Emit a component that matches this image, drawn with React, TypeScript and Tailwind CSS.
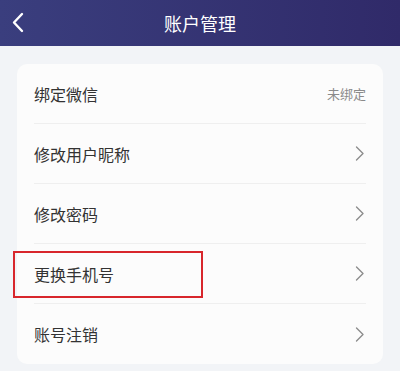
const rows = [
  { label: '绑定微信', value: '未绑定' },
  { label: '修改用户昵称' },
  { label: '修改密码' },
  { label: '更换手机号', marked: true },
  { label: '账号注销' },
];

function Chevron() {
  return (
    <svg width="10" height="15" viewBox="0 0 10 15" fill="none" stroke="#8c8c8c" strokeWidth="1.4" strokeLinecap="round" strokeLinejoin="round">
      <path d="M1.5 1 L8 7.5 L1.5 14" />
    </svg>
  );
}

export default function App() {
  return (
    <div
      className="w-[400px] h-[371px] bg-[#f2f4f7] overflow-hidden"
      style={{ fontFamily: '"Noto Sans CJK SC", "Noto Sans", sans-serif' }}
    >
      <header className="relative h-[46px] flex items-center justify-center bg-gradient-to-r from-[#3a3e7e] to-[#302a69]">
        <svg
          className="absolute left-[11px] top-[12px]"
          width="14"
          height="21"
          viewBox="0 0 14 21"
          fill="none"
          stroke="white"
          strokeWidth="2.4"
          strokeLinecap="round"
          strokeLinejoin="round"
        >
          <path d="M11 2 L3 10.5 L11 19" />
        </svg>
        <h1 className="text-[18px] text-white">账户管理</h1>
      </header>

      <div className="px-[17px] pt-[18px]">
        <div className="relative bg-[#fcfcfc] rounded-[10px] px-[17px]">
          {rows.map((row, i) => (
            <div
              key={row.label}
              className={`relative h-[60px] flex items-center justify-between ${
                i < rows.length - 1 ? 'border-b border-[#efefef]' : ''
              }`}
            >
              {row.marked && (
                <div className="absolute left-[-21px] top-[7px] w-[190px] h-[47px] border-2 border-[#d8262c]" />
              )}
              <span className="text-[16px] text-[#333333]">{row.label}</span>
              {row.value ? (
                <span className="text-[13px] text-[#8a8a8a]">{row.value}</span>
              ) : (
                <span className="pr-[1px]">
                  <Chevron />
                </span>
              )}
            </div>
          ))}
        </div>
      </div>
    </div>
  );
}
